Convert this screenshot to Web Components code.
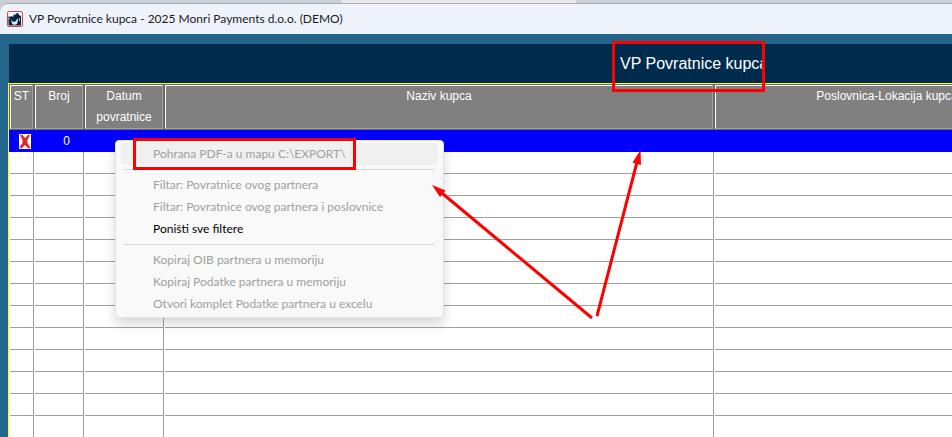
<!DOCTYPE html>
<html lang="hr">
<head>
<meta charset="utf-8">
<title>VP Povratnice kupca</title>
<style>
    html, body {
        margin: 0;
        height: 100%;
        overflow: hidden;
    }
</style>
</head>
<body>
<returns-app></returns-app>

<script>
class TitleBar extends HTMLElement {
    constructor() {
        super();
        this.attachShadow({ mode: "open" });
    }

    connectedCallback() {
        this.shadowRoot.innerHTML = `
            <style>
                :host {
                    display: block;
                    background: #cbd0d6;
                }

                .tabs {
                    display: flex;
                    height: 3px;
                    padding-left: 342px;
                }

                .tab {
                    width: 234px;
                    background: #e9e9e9;
                }

                .bar {
                    display: flex;
                    align-items: center;
                    gap: 6px;
                    height: 30px;
                    padding-left: 7px;
                    background: #eef3fb;
                    border-top: 1px solid #a9adb1;
                    border-top-left-radius: 8px;
                }

                h1 {
                    margin: 0;
                    font: 12px/16px Lato, sans-serif;
                    color: #1b1b1b;
                    white-space: nowrap;
                }
            </style>
            <div class="tabs"><div class="tab"></div></div>
            <div class="bar">
                <svg width="16" height="16" viewBox="0 0 16 16" aria-hidden="true">
                    <rect x=".5" y=".5" width="15" height="15" rx="1.5" fill="#f4f6fa" stroke="#d9454f"/>
                    <path d="M1.500 5 3 6l1.500-1 1.500 1 1-3 1 1 2-2h1l1 2 2 1v9.500h-12.500z" fill="#0c2444"/>
                    <path d="m4 8 1 2 2 1 2-1 1.500-3 .5 2-1 4-3 1-2-1.500z" fill="#e6edf6"/>
                    <path d="M12 7h1v3h-1zM2 7h1v1H2z" fill="#a3b3c9"/>
                </svg>
                <h1><slot></slot></h1>
            </div>
        `;
    }
}

class GridCaption extends HTMLElement {
    constructor() {
        super();
        this.attachShadow({ mode: "open" });
    }

    connectedCallback() {
        this.shadowRoot.innerHTML = `
            <style>
                :host {
                    display: flex;
                    align-items: center;
                    justify-content: center;
                    height: 39px;
                    background: #002b4d;
                    color: #fff;
                }

                h2 {
                    width: 145px;
                    margin: 0;
                    overflow: hidden;
                    font: 16px/20px "Liberation Sans", Arial, sans-serif;
                    white-space: nowrap;
                }
            </style>
            <h2><slot></slot></h2>
        `;
    }
}

class ReturnsGrid extends HTMLElement {
    constructor() {
        super();
        this.attachShadow({ mode: "open" });
        this.emptyRows = 14;
    }

    connectedCallback() {
        const emptyRow = "<tr><td></td><td></td><td></td><td></td><td></td><td></td></tr>";

        this.shadowRoot.innerHTML = `
            <style>
                :host {
                    display: block;
                    background: #fff;
                    border-top: 1px solid #ff0;
                    font: 12px/21px "Liberation Sans", Arial, sans-serif;
                }

                table {
                    width: 100%;
                    table-layout: fixed;
                    border-collapse: separate;
                    border-spacing: 0;
                }

                th, td {
                    box-sizing: border-box;
                    padding: 0;
                    font-weight: 400;
                }

                th {
                    height: 46px;
                    padding: 1px;
                    background: #696969;
                    color: #fff;
                }

                th div {
                    box-sizing: border-box;
                    height: 44px;
                    background: #808080;
                    border: 1px solid #fff;
                    border-right-color: #a0a0a0;
                    border-bottom-color: #a0a0a0;
                }

                td {
                    height: 22px;
                    border-right: 1px solid #a0a0a0;
                    background: linear-gradient(#a0a0a0, #a0a0a0) 1px 100% / 100% 1px no-repeat;
                }

                .selected td {
                    background: #00f;
                    border-right-color: #00f;
                    color: #fff;
                }

                .selected .number {
                    padding-right: 13px;
                    text-align: right;
                    vertical-align: bottom;
                }

                .selected .status {
                    padding-left: 10px;
                    vertical-align: middle;
                }

                .status svg {
                    display: block;
                }
            </style>
            <table>
                <colgroup>
                    <col style="width: 25px">
                    <col style="width: 50px">
                    <col style="width: 80px">
                    <col style="width: 550px">
                    <col style="width: 346px">
                    <col>
                </colgroup>
                <thead>
                    <tr>
                        <th scope="col"><div>ST</div></th>
                        <th scope="col"><div>Broj</div></th>
                        <th scope="col"><div>Datum<br>povratnice</div></th>
                        <th scope="col"><div>Naziv kupca</div></th>
                        <th scope="col"><div>Poslovnica-Lokacija kupca</div></th>
                        <th scope="col"><div></div></th>
                    </tr>
                </thead>
                <tbody>
                    <tr class="selected">
                        <td class="status">
                            <svg width="12" height="15" viewBox="0 0 12 15" aria-hidden="true">
                                <path d="M0 0h12v15H0z" fill="#fff"/>
                                <path d="M1 1h2.500L6 4l3-3h2L8.500 6v3l3 5-2 .5L6 11l-3.500 3.500L.500 13l3-4V6z" fill="#d92b2b"/>
                            </svg>
                        </td>
                        <td class="number">0</td>
                        <td></td>
                        <td></td>
                        <td></td>
                        <td></td>
                    </tr>
                    ${emptyRow.repeat(this.emptyRows)}
                </tbody>
            </table>
        `;
    }
}

class ContextMenu extends HTMLElement {
    constructor() {
        super();
        this.attachShadow({ mode: "open" });
    }

    connectedCallback() {
        this.shadowRoot.innerHTML = `
            <style>
                :host {
                    display: block;
                    box-sizing: border-box;
                    width: 329px;
                    padding: 2px 5px;
                    background: #f9f9f9;
                    border: 1px solid #e2e2e2;
                    border-radius: 4px;
                    box-shadow: 0 6px 12px rgba(0, 0, 0, 0.16);
                }

                button {
                    display: block;
                    width: 100%;
                    height: 22px;
                    padding: 0 0 0 32px;
                    background: transparent;
                    border: none;
                    border-radius: 4px;
                    font: 12px/22px Lato, sans-serif;
                    color: #000;
                    text-align: left;
                    white-space: nowrap;
                }

                button:disabled {
                    color: #a0a0a0;
                }

                button.active {
                    background: #f0f0f0;
                }

                hr {
                    height: 1px;
                    margin: 4px 3px;
                    background: #d7d7d7;
                    border: none;
                }
            </style>
            <button class="active" disabled>Pohrana PDF-a u mapu C:\\EXPORT\\</button>
            <hr>
            <button disabled>Filtar: Povratnice ovog partnera</button>
            <button disabled>Filtar: Povratnice ovog partnera i poslovnice</button>
            <button>Poništi sve filtere</button>
            <hr>
            <button disabled>Kopiraj OIB partnera u memoriju</button>
            <button disabled>Kopiraj Podatke partnera u memoriju</button>
            <button disabled>Otvori komplet Podatke partnera u excelu</button>
        `;
    }
}

class MarkLayer extends HTMLElement {
    constructor() {
        super();
        this.attachShadow({ mode: "open" });
    }

    connectedCallback() {
        this.shadowRoot.innerHTML = `
            <style>
                :host {
                    display: block;
                    pointer-events: none;
                }

                svg {
                    display: block;
                }
            </style>
            <svg width="800" height="330" fill="none" stroke="#f00" stroke-width="3" aria-hidden="true">
                <rect x="613.500" y="42.500" width="150" height="48"/>
                <rect x="134.500" y="139.500" width="220" height="29"/>
                <path d="M592 318 440 191.500M597 316 637 162"/>
                <path d="m432 185 13.500 5.500-5.500 6.500zM640.500 150l.5 15-8.500-2.500z" fill="#f00" stroke="none"/>
            </svg>
        `;
    }
}

class ReturnsApp extends HTMLElement {
    constructor() {
        super();
        this.attachShadow({ mode: "open" });
    }

    connectedCallback() {
        this.shadowRoot.innerHTML = `
            <style>
                :host {
                    position: relative;
                    display: flex;
                    flex-direction: column;
                    height: 100vh;
                    overflow: hidden;
                    background: #24668b;
                }

                /* the form is wider than the visible part of the window */
                main {
                    flex: 1;
                    min-width: 1368px;
                    padding: 10px 0 0 8px;
                }

                grid-caption {
                    margin-left: 1px;
                }

                returns-grid {
                    border-left: 1px solid #ff0;
                }

                context-menu {
                    position: absolute;
                    left: 115px;
                    top: 140px;
                }

                mark-layer {
                    position: absolute;
                    left: 0;
                    top: 0;
                }
            </style>
            <title-bar>VP Povratnice kupca - 2025 Monri Payments d.o.o. (DEMO)</title-bar>
            <main>
                <grid-caption>VP Povratnice kupca</grid-caption>
                <returns-grid></returns-grid>
            </main>
            <context-menu></context-menu>
            <mark-layer></mark-layer>
        `;
    }
}

customElements.define("title-bar", TitleBar);
customElements.define("grid-caption", GridCaption);
customElements.define("returns-grid", ReturnsGrid);
customElements.define("context-menu", ContextMenu);
customElements.define("mark-layer", MarkLayer);
customElements.define("returns-app", ReturnsApp);
</script>
</body>
</html>
